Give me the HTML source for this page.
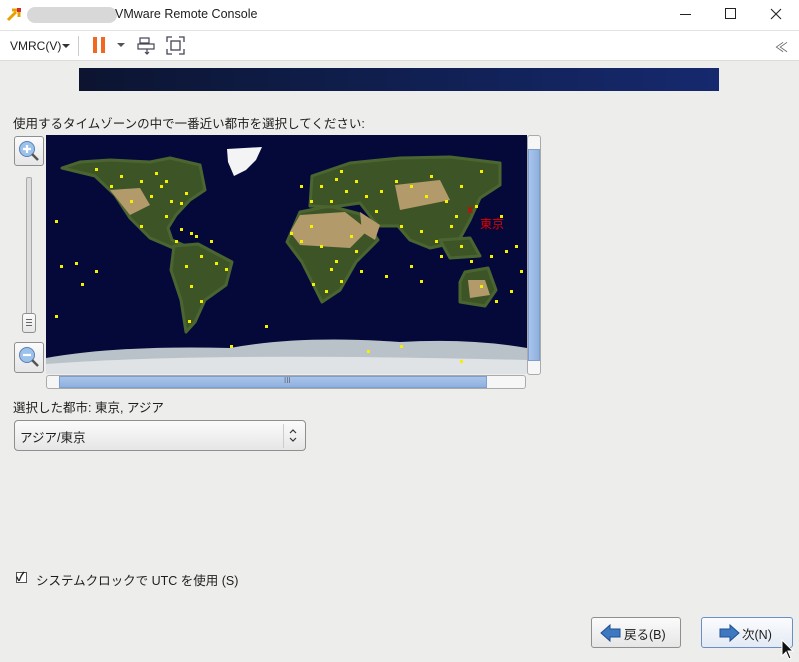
<!DOCTYPE html>
<html><head><meta charset="utf-8"><style>
*{margin:0;padding:0;box-sizing:border-box}
body{width:799px;height:662px;overflow:hidden;background:#ededeb;font-family:"Liberation Sans","Noto Sans CJK JP",sans-serif;position:relative;color:#222}
.abs{position:absolute}
#title{left:0;top:0;width:799px;height:30px;background:#fff;font-size:12px}
#tb{left:0;top:30px;width:799px;height:31px;background:#fff;border-top:1px solid #e4e4e4;border-bottom:1px solid #ddd}
.t{font-size:12.5px;color:#1e1e1e;white-space:nowrap}
.btn{border:1px solid #8f8f8f;border-radius:3px;background:linear-gradient(#fbfbfb,#e6e6e6)}
</style></head><body>
<div id="title" class="abs">
 <svg class="abs" style="left:6px;top:5px" width="18" height="18"><path d="M2 15 L10 7 M6 5 H13 V12" stroke="#e8a000" stroke-width="3" fill="none"/><rect x="11" y="3" width="4" height="4" fill="#d03030"/></svg>
 <div class="abs" style="left:27px;top:7px;width:90px;height:16px;border-radius:8px;background:#d8d8d8"></div>
 <div class="abs t" style="left:115px;top:7px;font-size:12.5px">VMware Remote Console</div>
 <div class="abs" style="left:680px;top:14px;width:11px;height:1px;background:#222"></div>
 <div class="abs" style="left:725px;top:8px;width:11px;height:11px;border:1px solid #222"></div>
 <svg class="abs" style="left:770px;top:8px" width="12" height="12"><path d="M1 1L11 11M11 1L1 11" stroke="#222" stroke-width="1.1"/></svg>
</div>
<div id="tb" class="abs">
 <div class="abs t" style="left:10px;top:8px;font-size:12px">VMRC(V)</div>
 <svg class="abs" style="left:62px;top:13px" width="8" height="5"><path d="M0 0H8L4 4Z" fill="#333"/></svg>
 <div class="abs" style="left:78px;top:5px;width:1px;height:20px;background:#ccc"></div>
 <div class="abs" style="left:93px;top:6px;width:4px;height:16px;background:#f26722"></div>
 <div class="abs" style="left:101px;top:6px;width:4px;height:16px;background:#f26722"></div>
 <svg class="abs" style="left:117px;top:12px" width="8" height="5"><path d="M0 0H8L4 4Z" fill="#555"/></svg>
 <svg class="abs" style="left:137px;top:5px" width="20" height="20"><g stroke="#445" fill="none" stroke-width="1.2"><rect x="3" y="2" width="9" height="5"/><rect x="1" y="8" width="16" height="5"/><path d="M10 13V18M8 16L10 18L12 16"/></g></svg>
 <svg class="abs" style="left:166px;top:5px" width="20" height="20"><g stroke="#445" fill="none" stroke-width="1.3"><path d="M1 6V1H6M13 1H18V6M18 13V18H13M6 18H1V13"/><rect x="5" y="5" width="9" height="9"/></g></svg>
 <div class="abs t" style="left:775px;top:6px;color:#666;font-size:13px">≪</div>
</div>
<div class="abs" style="left:79px;top:68px;width:640px;height:23px;background:linear-gradient(90deg,#0c1430,#0f1d4a 40%,#16296e)"></div>
<div class="abs t" style="left:13px;top:113px">使用するタイムゾーンの中で一番近い都市を選択してください:</div>

<div class="abs btn" style="left:14px;top:136px;width:30px;height:30px"></div>
<svg class="abs" style="left:17px;top:139px" width="26" height="26"><circle cx="10" cy="10" r="7.5" fill="#9cc2ec" stroke="#5a7fb5"/><path d="M6 10H14M10 6V14" stroke="#fff" stroke-width="2.2"/><path d="M15 15L21 21" stroke="#555" stroke-width="2.5"/></svg>
<div class="abs" style="left:26px;top:177px;width:6px;height:140px;border:1px solid #aaa;background:#ddd;border-radius:2px"></div>
<div class="abs btn" style="left:22px;top:313px;width:14px;height:20px;border-radius:3px"></div>
<div class="abs" style="left:26px;top:319px;width:6px;height:1px;background:#666;box-shadow:0 3px #666,0 6px #666"></div>
<div class="abs btn" style="left:14px;top:342px;width:30px;height:31px"></div>
<svg class="abs" style="left:17px;top:345px" width="26" height="26"><circle cx="10" cy="10" r="7.5" fill="#9cc2ec" stroke="#5a7fb5"/><path d="M6 10H14" stroke="#fff" stroke-width="2.2"/><path d="M15 15L21 21" stroke="#555" stroke-width="2.5"/></svg>

<svg class="abs" style="left:46px;top:135px" width="481" height="239" viewBox="46 135 481 239">
<rect x="46" y="135" width="481" height="239" fill="#05093a"/>
<g fill="#3d5526" stroke="#4b6530" stroke-width="3" stroke-linejoin="round">
<path d="M62 168 L80 162 L110 160 L150 162 L170 158 L200 165 L205 190 L190 200 L176 215 L168 228 L172 240 L190 248 L178 250 L150 238 L130 218 L115 195 L95 176 Z"/>
<path d="M174 246 L198 244 L232 262 L226 285 L205 300 L195 322 L186 332 L181 300 L171 270 Z"/>
<path d="M300 212 L330 206 L360 214 L378 240 L356 262 L340 290 L322 302 L302 262 L287 242 Z"/>
<path d="M312 176 L350 163 L400 158 L450 157 L500 163 L500 185 L480 198 L470 220 L458 242 L430 248 L410 240 L398 226 L378 226 L360 203 L332 207 L310 206 Z"/>
<path d="M465 272 L488 268 L496 290 L485 306 L460 302 L460 282 Z"/>
<path d="M440 240 L470 238 L480 256 L450 258 Z"/>
</g>
<g fill="#b39a6b">
<path d="M300 215 L345 212 L368 230 L350 248 L300 245 L290 232 Z"/>
<path d="M360 212 L380 225 L375 240 L362 232 Z"/>
<path d="M395 185 L440 180 L450 200 L400 210 Z"/>
<path d="M468 280 L485 280 L490 295 L470 298 Z"/>
<path d="M110 190 L140 188 L150 205 L130 215 Z"/>
</g>
<path d="M227 149 L262 147 L256 160 L246 170 L234 176 L228 162 Z" fill="#f4f4f4"/>
<path d="M46 358 Q120 345 230 348 Q300 335 400 342 Q470 338 527 348 L527 374 L46 374 Z" fill="#b9c2c9"/>
<path d="M46 364 Q200 352 527 360 L527 374 L46 374 Z" fill="#dfe3e6"/>
<g fill="#f5f000">
<rect x="95" y="168" width="3" height="3"/><rect x="120" y="175" width="3" height="3"/><rect x="140" y="180" width="3" height="3"/><rect x="160" y="185" width="3" height="3"/><rect x="170" y="200" width="3" height="3"/><rect x="150" y="195" width="3" height="3"/><rect x="130" y="200" width="3" height="3"/><rect x="185" y="192" width="3" height="3"/><rect x="165" y="215" width="3" height="3"/><rect x="180" y="228" width="3" height="3"/><rect x="195" y="235" width="3" height="3"/><rect x="175" y="240" width="3" height="3"/><rect x="140" y="225" width="3" height="3"/><rect x="210" y="240" width="3" height="3"/><rect x="200" y="255" width="3" height="3"/><rect x="185" y="265" width="3" height="3"/><rect x="215" y="262" width="3" height="3"/><rect x="190" y="285" width="3" height="3"/><rect x="200" y="300" width="3" height="3"/><rect x="188" y="320" width="3" height="3"/><rect x="225" y="268" width="3" height="3"/><rect x="55" y="220" width="3" height="3"/><rect x="75" y="262" width="3" height="3"/><rect x="95" y="270" width="3" height="3"/><rect x="60" y="265" width="3" height="3"/><rect x="55" y="315" width="3" height="3"/><rect x="81" y="283" width="3" height="3"/><rect x="180" y="202" width="3" height="3"/><rect x="165" y="180" width="3" height="3"/><rect x="190" y="232" width="3" height="3"/><rect x="155" y="172" width="3" height="3"/><rect x="110" y="185" width="3" height="3"/>
<rect x="320" y="185" width="3" height="3"/><rect x="335" y="178" width="3" height="3"/><rect x="345" y="190" width="3" height="3"/><rect x="355" y="180" width="3" height="3"/><rect x="365" y="195" width="3" height="3"/><rect x="310" y="200" width="3" height="3"/><rect x="330" y="200" width="3" height="3"/><rect x="375" y="210" width="3" height="3"/><rect x="395" y="180" width="3" height="3"/><rect x="410" y="185" width="3" height="3"/><rect x="430" y="175" width="3" height="3"/><rect x="445" y="200" width="3" height="3"/><rect x="460" y="185" width="3" height="3"/><rect x="480" y="170" width="3" height="3"/><rect x="400" y="225" width="3" height="3"/><rect x="420" y="230" width="3" height="3"/><rect x="435" y="240" width="3" height="3"/><rect x="455" y="215" width="3" height="3"/><rect x="460" y="245" width="3" height="3"/><rect x="470" y="260" width="3" height="3"/><rect x="490" y="255" width="3" height="3"/><rect x="480" y="285" width="3" height="3"/><rect x="495" y="300" width="3" height="3"/><rect x="510" y="290" width="3" height="3"/><rect x="505" y="250" width="3" height="3"/><rect x="520" y="270" width="3" height="3"/><rect x="300" y="240" width="3" height="3"/><rect x="320" y="245" width="3" height="3"/><rect x="335" y="260" width="3" height="3"/><rect x="355" y="250" width="3" height="3"/><rect x="340" y="280" width="3" height="3"/><rect x="325" y="290" width="3" height="3"/><rect x="360" y="270" width="3" height="3"/><rect x="310" y="225" width="3" height="3"/><rect x="290" y="232" width="3" height="3"/><rect x="312" y="283" width="3" height="3"/><rect x="385" y="275" width="3" height="3"/><rect x="410" y="265" width="3" height="3"/><rect x="420" y="280" width="3" height="3"/><rect x="440" y="255" width="3" height="3"/><rect x="460" y="360" width="3" height="3"/><rect x="367" y="350" width="3" height="3"/><rect x="400" y="345" width="3" height="3"/><rect x="265" y="325" width="3" height="3"/><rect x="230" y="345" width="3" height="3"/><rect x="475" y="205" width="3" height="3"/><rect x="500" y="215" width="3" height="3"/><rect x="515" y="245" width="3" height="3"/><rect x="340" y="170" width="3" height="3"/><rect x="380" y="190" width="3" height="3"/><rect x="300" y="185" width="3" height="3"/><rect x="350" y="235" width="3" height="3"/><rect x="330" y="268" width="3" height="3"/><rect x="425" y="195" width="3" height="3"/><rect x="450" y="225" width="3" height="3"/>
</g>
<text x="467" y="213" fill="#e00000" font-size="11" font-weight="bold" font-family="Liberation Sans,sans-serif">x</text>
<text x="480" y="228" fill="#e00000" font-size="12" font-family="Liberation Sans,Noto Sans CJK JP,sans-serif">東京</text>
</svg>
<div class="abs" style="left:527px;top:135px;width:14px;height:240px;border:1px solid #aaa;border-radius:3px;background:#f6f6f6"></div>
<div class="abs" style="left:528px;top:149px;width:12px;height:212px;background:linear-gradient(90deg,#a9c4ea,#8fb0dd);border:1px solid #7d9fcf"></div>
<div class="abs" style="left:46px;top:375px;width:480px;height:14px;border:1px solid #aaa;border-radius:3px;background:#f6f6f6"></div>
<div class="abs" style="left:59px;top:376px;width:428px;height:12px;background:linear-gradient(#a9c4ea,#8fb0dd);border:1px solid #7d9fcf"></div>
<div class="abs t" style="left:284px;top:376px;font-size:8px;color:#667">III</div>

<div class="abs t" style="left:13px;top:397px">選択した都市: 東京, アジア</div>
<div class="abs btn" style="left:14px;top:420px;width:292px;height:31px;border-radius:4px"></div>
<div class="abs t" style="left:20px;top:427px">アジア/東京</div>
<div class="abs" style="left:283px;top:424px;width:1px;height:24px;background:#ccc"></div>
<svg class="abs" style="left:288px;top:428px" width="10" height="15"><path d="M2 5L5 2L8 5M2 10L5 13L8 10" stroke="#333" fill="none" stroke-width="1.2"/></svg>

<div class="abs" style="left:16px;top:572px;width:11px;height:11px;border:1px solid #555;background:#fff"></div>
<div class="abs t" style="left:16px;top:568px;font-size:12px;font-weight:bold">✓</div>
<div class="abs t" style="left:36px;top:570px">システムクロックで UTC を使用 (S)</div>

<div class="abs btn" style="left:591px;top:617px;width:90px;height:31px;border-radius:3px"></div>
<svg class="abs" style="left:600px;top:623px" width="22" height="20"><path d="M1 10L10 2V6H20V14H10V18Z" fill="#3d78c0" stroke="#1f4f8f"/></svg>
<div class="abs t" style="left:624px;top:624px">戻る(B)</div>
<div class="abs btn" style="left:701px;top:617px;width:92px;height:31px;border-radius:3px;border-color:#6b8fc4;background:linear-gradient(#fbfcfe,#e3eaf4)"></div>
<svg class="abs" style="left:718px;top:623px" width="22" height="20"><path d="M21 10L12 2V6H2V14H12V18Z" fill="#3d78c0" stroke="#1f4f8f"/></svg>
<div class="abs t" style="left:742px;top:624px">次(N)</div>
<svg class="abs" style="left:781px;top:639px" width="14" height="22"><path d="M1 1V17L5 13L8 20L10 19L7 12H12Z" fill="#111" stroke="#fff"/></svg>
</body></html>
